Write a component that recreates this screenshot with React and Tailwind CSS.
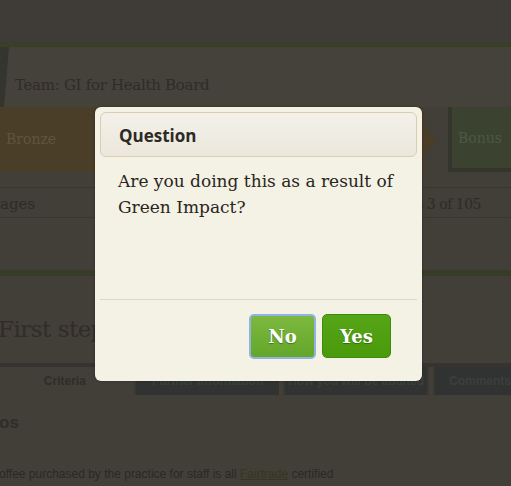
import React from "react";

const serif = { fontFamily: '"DejaVu Serif", serif' };

const Page = () => {
  return (
    <div className="w-[511px] h-[486px] overflow-hidden bg-[#423e38] text-[#2e2b27]" style={serif}>
      {/* top bar */}
      <div className="h-[42px] bg-[#3f3b36]" />
      <div className="h-[5px] bg-[#3a4028]" />

      {/* team header */}
      <div className="h-[60px] bg-[#45413b] flex items-end pb-[11px] relative">
        <svg width="9" height="60" viewBox="0 0 9 60" className="absolute left-0 top-0">
          <polygon points="0,0 9,0 4,60 0,60" fill="#353530" />
        </svg>
        <span className="ml-[15px] text-[15px] tracking-[-0.3px] text-[#2f2c28]">Team: GI for Health Board</span>
      </div>

      {/* level progress */}
      <div className="h-[65px] flex">
        <div className="w-[436px] flex">
          <div className="flex-1 bg-[#4a3e29] flex items-center pl-[6px] text-[14px] text-[#5f5440]">Bronze</div>
          <svg width="12" height="65" viewBox="0 0 12 65" className="shrink-0">
            <polygon points="0,18 12,33 0,48" fill="#4a3e29" />
          </svg>
        </div>
        <div className="ml-[12px] flex-1 bg-[#3b4330] border-l-[4px] border-b-[4px] border-[#34362d] flex items-center pl-[6px] pt-[2px] text-[14px] text-[#4e5644]">
          Bonus
        </div>
      </div>

      {/* pages row */}
      <div className="mt-[15px] h-[31px] border-y border-[#3a3732] flex items-center justify-between text-[15px] pt-[4px]">
        <span>ages</span>
        <span className="mr-[30px] text-[14px] tracking-[-0.5px]">s 3 of 105</span>
      </div>

      <div className="mt-[52px] h-[6px] bg-[#363c28]" />

      {/* criteria heading */}
      <div className="h-[87px] flex items-center pt-[20px]">
        <span className="text-[23px] tracking-[-0.5px] text-[#302d29] -ml-[2px] whitespace-nowrap">First steps</span>
      </div>
      <div className="h-[4px] bg-[#363330]" />

      {/* tabs */}
      <div className="h-[28px] flex gap-[4px] text-[12px] font-bold" style={{ fontFamily: '"Liberation Sans", Arial, sans-serif' }}>
        <div className="w-[131px] flex items-center justify-center text-[#2f2d29]">Criteria</div>
        <div className="w-[147px] bg-[#303332] border-l-[2px] border-[#3a3833] flex items-center justify-center text-[#3b3f3c] whitespace-nowrap">Further information</div>
        <div className="w-[147px] bg-[#303332] border-x-[2px] border-[#3a3833] flex items-center justify-center text-[#3b3f3c] whitespace-nowrap">How you will be audited</div>
        <div className="flex-1 bg-[#303332] border-l-[2px] border-[#3a3833] flex items-center pl-[14px] text-[#3b3f3c] whitespace-nowrap">Comments</div>
      </div>

      <div style={{ fontFamily: '"Liberation Sans", Arial, sans-serif' }} className="text-[#2f2d29]">
        <div className="mt-[18px] text-[17px] font-bold leading-[20px] -ml-[1px]">os</div>
        <div className="mt-[34px] text-[12px] leading-[14px] whitespace-nowrap -ml-[1px] text-[#2b2925]">
          offee purchased by the practice for staff is all <span className="underline text-[#33381f]">Fairtrade</span> certified
        </div>
      </div>
    </div>
  );
};

const Dialog = () => {
  return (
    <div className="absolute left-[95px] top-[107px] w-[327px] h-[274px] bg-[#f4f1e5] rounded-[6px] shadow-[0_0_3px_rgba(0,0,0,0.3)] p-[5px] flex flex-col">
      <div className="h-[45px] rounded-[6px] border border-[#d9cfae] bg-gradient-to-b from-[#f3f1ea] to-[#ebe7dc] flex items-center pl-[18px] pt-[2px]">
        <span className="text-[17px] font-bold text-[#2d2a24]" style={{ fontFamily: '"Open Sans", sans-serif' }}>Question</span>
      </div>
      <div className="px-[18px] pt-[11px] text-[17px] leading-[26px] text-[#2a2520] flex-1" style={serif}>
        Are you doing this as a result of Green Impact?
      </div>
      <div className="h-px bg-[#ddd8c6]" />
      <div className="h-[76px] flex justify-end items-start pt-[14px] pr-[26px] gap-[6px]" style={serif}>
        <button className="w-[67px] h-[45px] rounded-[5px] border-2 border-[#8fb4e3] bg-gradient-to-b from-[#7db83f] to-[#63a62a] text-white font-bold text-[18px] [text-shadow:0_1px_1px_rgba(0,0,0,0.35)]">
          No
        </button>
        <button className="w-[69px] h-[44px] rounded-[5px] border border-[#3f8a0c] bg-gradient-to-b from-[#56a518] to-[#4a9a0a] text-white font-bold text-[18px] [text-shadow:0_1px_1px_rgba(0,0,0,0.35)]">
          Yes
        </button>
      </div>
    </div>
  );
};

export default function App() {
  return (
    <div className="relative w-[511px] h-[486px]">
      <Page />
      <Dialog />
    </div>
  );
}
